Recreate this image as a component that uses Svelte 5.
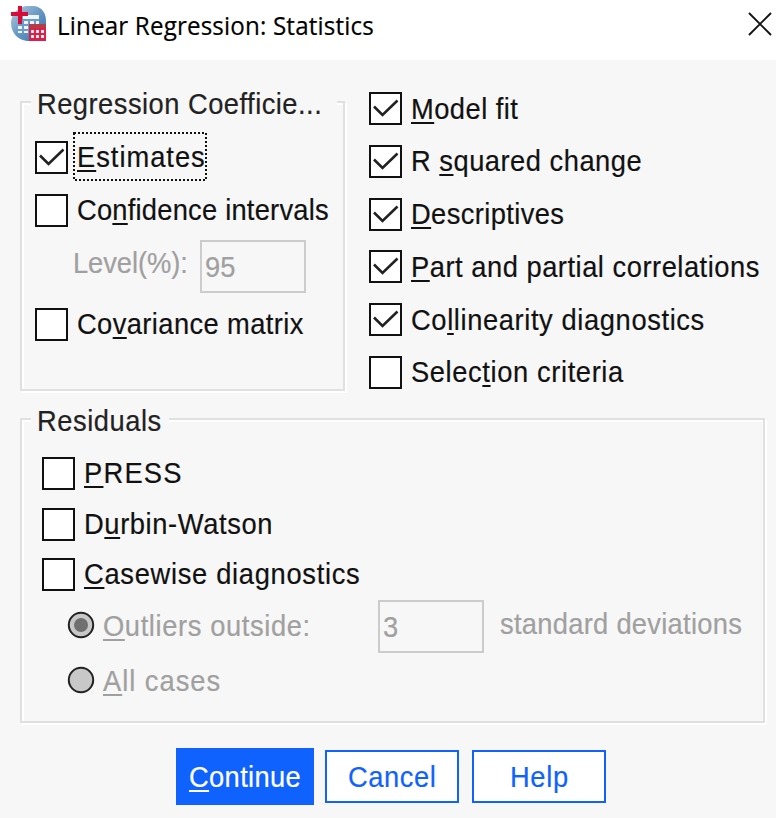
<script>
  const coefficients = [
    { pre: '', key: 'E', post: 'stimates', w: 129, on: true, focus: true },
    { pre: 'Co', key: 'n', post: 'fidence intervals', w: 252 }
  ];
  const covariance = { pre: 'Co', key: 'v', post: 'ariance matrix', w: 227 };
  const options = [
    { pre: '', key: 'M', post: 'odel fit', w: 107, on: true },
    { pre: 'R ', key: 's', post: 'quared change', w: 231, on: true },
    { pre: '', key: 'D', post: 'escriptives', w: 153, on: true },
    { pre: '', key: 'P', post: 'art and partial correlations', w: 349, on: true },
    { pre: 'Co', key: 'l', post: 'linearity diagnostics', w: 294, on: true },
    { pre: 'Selec', key: 't', post: 'ion criteria', w: 213 }
  ];
  const residuals = [
    { pre: '', key: 'P', post: 'RESS', w: 99 },
    { pre: 'D', key: 'u', post: 'rbin-Watson', w: 189 },
    { pre: '', key: 'C', post: 'asewise diagnostics', w: 276 }
  ];

  // Narrows the glyphs and spreads the tracking so the run fills its width.
  function fit(node, { w, scale }) {
    const natural = node.offsetWidth;
    const gaps = node.textContent.length;
    node.style.letterSpacing = (w / scale - natural) / gaps + 'px';
    node.style.transform = `scaleX(${scale})`;
  }
</script>

{#snippet label(pre, key, post, w, scale = 0.91)}
  <span class="label" style="width:{w}px"><span class="run" use:fit={{ w, scale }}>{pre}{#if key}<u>{key}</u>{/if}{post}</span></span>
{/snippet}

{#snippet check(o)}
  <div class="check">
    <span class="box">
      {#if o.on}
        <svg viewBox="0 0 33 33" width="33" height="33"><path d="M5 14.5 L13.5 23 L28.5 8.5" fill="none" stroke="#222" stroke-width="2.6" /></svg>
      {/if}
    </span>
    <span class="text">
      {@render label(o.pre, o.key, o.post, o.w)}
      {#if o.focus}
        <svg class="focus" width="135" height="50"><rect x="1" y="1" width="132" height="47" fill="none" stroke="#111" stroke-width="2" stroke-dasharray="2 2" /></svg>
      {/if}
    </span>
  </div>
{/snippet}

<div class="dialog">
  <header>
    <svg class="logo" viewBox="0 0 36 36" width="36" height="36">
      <defs>
        <linearGradient id="globe" x1="0" y1="0" x2="1" y2="1">
          <stop offset="0" stop-color="#b4cde2" />
          <stop offset=".5" stop-color="#6797c4" />
          <stop offset="1" stop-color="#2e70ad" />
        </linearGradient>
      </defs>
      <path d="M17 0H23C31 1 35 7 35 15V35H16C7 34 0 27 0 17C0 8 7 0 17 0Z" fill="url(#globe)" />
      <path d="M7 9H28V27H7Z" fill="#6b9bcb" />
      <path d="M12 9H28V13H12ZM7 15H11V18H7ZM13 15H17V18H13ZM19 15H23V18H19ZM25 15H28V18H25ZM7 20H11V23H7ZM13 20H17V23H13ZM7 25H11V27H7ZM13 25H17V27H13Z" fill="#edf4fa" />
      <path d="M7 0H11V6H17V10H11V18H7V10H0V6H7Z" fill="#d90b36" />
      <path d="M18 18H35V35H18Z" fill="#d72349" />
      <path d="M18 18H35V22H18Z" fill="#b73b47" />
      <path d="M20 24H23V27H20ZM25 24H28V27H25ZM30 24H33V27H30ZM20 29H23V32H20ZM25 29H28V32H25ZM30 29H33V32H30Z" fill="#fbe8ec" />
    </svg>
    <h1>{@render label('Linear Regression: Statistics', '', '', 317, 0.93)}</h1>
    <svg class="close" viewBox="0 0 24 24" width="24" height="24"><path d="M1 1L23 23M23 1L1 23" stroke="#111" stroke-width="1.9" /></svg>
  </header>

  <main>
    <div class="top">
      <section class="group coefs">
        <h2>{@render label('Regression Coefficie...', '', '', 285)}</h2>
        {#each coefficients as o}{@render check(o)}{/each}
        <div class="level">
          {@render label('Level(%):', '', '', 115)}
          <span class="field">{@render label('95', '', '', 30)}</span>
        </div>
        {@render check(covariance)}
      </section>
      <div class="options">
        {#each options as o}{@render check(o)}{/each}
      </div>
    </div>

    <section class="group resid">
      <h2>{@render label('Residuals', '', '', 125)}</h2>
      {#each residuals as o}{@render check(o)}{/each}
      <div class="radio first">
        <svg viewBox="0 0 28 28" width="28" height="28"><circle cx="14" cy="14" r="12.2" fill="#c8c8c8" stroke="#222" stroke-width="2" /><circle cx="14" cy="14" r="7" fill="#707070" /></svg>
        {@render label('', 'O', 'utliers outside:', 208)}
        <span class="field">{@render label('3', '', '', 15)}</span>
        <span class="unit">{@render label('standard deviations', '', '', 242)}</span>
      </div>
      <div class="radio second">
        <svg viewBox="0 0 28 28" width="28" height="28"><circle cx="14" cy="14" r="12.2" fill="#c8c8c8" stroke="#222" stroke-width="2" /></svg>
        {@render label('', 'A', 'll cases', 118)}
      </div>
    </section>

    <footer>
      <button class="primary">{@render label('', 'C', 'ontinue', 112)}</button>
      <button>{@render label('Cancel', '', '', 88)}</button>
      <button>{@render label('Help', '', '', 59)}</button>
    </footer>
  </main>
</div>

<style>
  :global(body) { margin: 0; background: #f7f7f7; }
  .dialog {
    width: 776px; height: 818px; overflow: hidden; background: #f7f7f7; color: #111;
    font: 30px/33px "Liberation Sans", Arial, sans-serif;
    -webkit-text-stroke: 0.2px currentColor;
  }
  .dialog * { box-sizing: border-box; }
  header { height: 60px; background: #fff; display: flex; padding: 6px 4px 0 11px; }
  .logo, .close { flex: none; display: block; }
  h1 { margin: 1px 0 0 10px; font: 26px/36px "Open Sans", "Noto Sans", sans-serif; color: #000; }
  .close { margin: 6px 0 0 auto; }
  .label { display: block; flex: none; white-space: nowrap; }
  .run { display: inline-block; transform-origin: 0 50%; white-space: pre; }
  u { text-decoration: underline; text-decoration-thickness: 2px; text-underline-offset: 3px; text-decoration-skip-ink: none; }
  main { padding: 32px 11px 0 20px; }
  .top { display: flex; }
  .group { border: 2px solid #e0e0e0; box-shadow: 2px 2px 0 #fff, inset 2px 2px 0 #fff; }
  h2 { margin: 0; font: inherit; height: 33px; width: max-content; background: #f7f7f7; color: #222; }
  .coefs { width: 325px; height: 290px; margin-top: 9px; padding-left: 13px; }
  .coefs h2 { margin: -16px 0 21px -4px; padding: 0 15px 0 6px; }
  .coefs .check { margin-bottom: 20px; }
  .options { margin-left: 24px; display: flex; flex-direction: column; gap: 19.8px; }
  .check { display: flex; height: 33px; }
  .box { width: 33px; height: 33px; flex: none; border: 2px solid #111; background: #fff; }
  .box svg { display: block; margin: -2px; }
  .text { position: relative; margin: -1px 0 0 9px; }
  .options .text { margin-top: -0.5px; }
  .focus { position: absolute; left: -4px; top: -8px; }
  .level { display: flex; margin: -7px 0 16px 38px; height: 52px; color: #a0a0a0; }
  .level > .label { margin-top: 6px; }
  .field { display: block; flex: none; width: 106px; height: 53px; border: 2px solid #ccc; padding: 8px 0 0 3px; color: #a0a0a0; }
  .level .field { margin-left: 12px; }
  .resid { width: 745px; height: 305px; margin-top: 27px; padding-left: 20px; }
  .resid h2 { margin: -16px 0 20px -11px; padding: 0 7px 0 6px; }
  .resid .check { margin-bottom: 17.7px; }
  .radio { display: flex; color: #a0a0a0; margin-left: 25px; }
  .radio svg { display: block; flex: none; margin: 0 8px 0 0; }
  .first { height: 53px; margin-top: -9px; }
  .first > svg { margin-top: 11px; }
  .first > .label { margin-top: 8.5px; }
  .first .field { margin-left: 67px; }
  .unit { margin: 7px 0 0 16px; }
  .second { margin-top: 12px; }
  .second svg { margin-top: 1px; }
  .second .label { margin-top: -1px; }
  footer { display: flex; align-items: center; gap: 13px; margin: 25px 0 0 156px; }
  button {
    font: inherit; padding: 0; width: 134px; height: 53px; display: flex; align-items: center; justify-content: center;
    border: 2px solid #0f62fe; background: #fff; color: #0f62fe; -webkit-text-stroke: inherit;
  }
  .primary { width: 138px; height: 57px; margin-right: -2px; background: #0f62fe; color: #fff; }
</style>
